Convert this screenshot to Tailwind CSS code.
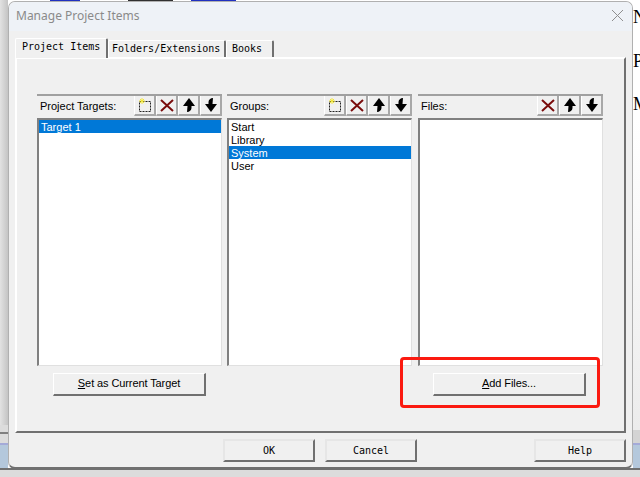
<!DOCTYPE html>
<html lang="en">
  <head>
    <meta charset="UTF-8" />
    <script src="https://cdn.jsdelivr.net/npm/@tailwindcss/browser@4"></script>
    <title>Manage Project Items</title>
  </head>
  <body class="relative w-[640px] h-[477px] overflow-hidden bg-white font-['Liberation_Sans',sans-serif] text-[11px] text-black">
    <!-- what is behind the dialog -->
    <div class="absolute left-0 top-0 w-[8px] h-[425px] bg-gradient-to-r from-[#e2e2e2] to-[#c4c4c4]"></div>
    <div class="absolute left-0 top-[425px] w-[8px] h-[18px] bg-[#dcdcdc]"></div>
    <div class="absolute left-0 top-[432px] w-[8px] h-[2px] bg-[#808080]"></div>
    <div class="absolute left-0 top-[443px] w-[8px] h-[2px] bg-[#a4aad8]"></div>
    <div class="absolute left-0 top-[445px] w-[8px] h-[23px] bg-[#b4c8dc]"></div>
    <div class="absolute left-0 top-[468px] w-[640px] h-[2px] bg-[#707070]"></div>
    <div class="absolute left-0 top-[470px] w-[640px] h-[7px] bg-[#dcdcdc]"></div>
    <div class="absolute left-[50px] top-0 flex gap-[4px]">
      <div class="w-[30px] h-px bg-[#2030c0]"></div>
      <div class="w-[40px] h-px bg-white"></div>
      <div class="w-[45px] h-px bg-[#303030]"></div>
      <div class="w-[10px] h-px bg-white"></div>
      <div class="w-[45px] h-px bg-[#2030c0]"></div>
    </div>
    <div class="absolute left-[633px] top-[4px] font-['Liberation_Serif',serif] text-[18px]">N</div>
    <div class="absolute left-[633px] top-[48px] font-['Liberation_Serif',serif] text-[18px]">P</div>
    <div class="absolute left-[633px] top-[91px] font-['Liberation_Serif',serif] text-[18px]">M</div>
    <div class="absolute left-[633px] top-[120px] w-[7px] h-[310px] bg-gradient-to-b from-white to-[#ececec]"></div>
    <div class="absolute left-[633px] top-[430px] w-[7px] h-[13px] bg-[#d4d4d4]"></div>
    <div class="absolute left-[633px] top-[443px] w-[7px] h-[2px] bg-[#a4aad8]"></div>
    <div class="absolute left-[633px] top-[445px] w-[7px] h-[23px] bg-[#b4c8dc]"></div>

    <!-- dialog -->
    <div class="absolute left-[8px] top-[1px] w-[625px] h-[468px] flex flex-col rounded-[7px] border border-[#b0b0b0] border-b-2 border-b-[#707070] bg-[#f0f0f0] overflow-hidden">
      <div class="h-[29px] shrink-0 flex items-center justify-between pl-[7px] pr-[8px] pb-[2px] bg-[#eef2f7] font-['Noto_Sans',sans-serif] text-[12px] text-[#8a8a8a]">
        <span>Manage Project Items</span>
        <svg width="13" height="13" viewBox="0 0 13 13" fill="none" stroke="#8f8f8f"><path d="M1 1l11 11M12 1L1 12" /></svg>
      </div>

      <div class="flex items-end h-[26px] shrink-0 pl-[6px] font-['DejaVu_Sans_Mono',monospace] text-[10px]">
        <div class="h-[20px] w-[93px] pl-[6px] border-t border-l border-white border-r-2 border-r-[#707070] bg-[#f0f0f0] rounded-t-[2px] relative top-[1px] z-10">Project Items</div>
        <div class="h-[17px] w-[118px] pl-[3px] border-t border-l border-white border-r-2 border-r-[#707070] rounded-t-[2px]">Folders/Extensions</div>
        <div class="h-[17px] w-[48px] pl-[5px] border-t border-l border-white border-r-2 border-r-[#707070] rounded-t-[2px]">Books</div>
      </div>

      <!-- tab body -->
      <div class="ml-[6px] w-[611px] h-[376px] shrink-0 border-t-2 border-l-2 border-[#ffffff] border-r-2 border-r-[#707070] border-b-2 border-b-[#707070] pt-[35px] pl-[20px]">
        <div class="flex gap-[5px]">
          <div class="w-[185px]">
            <div class="h-[22px] flex items-center justify-between border-t-2 border-[#a0a0a0]">
              <span class="pl-[3px]">Project Targets:</span>
              <div class="flex">
                <button class="w-[22px] h-[20px] flex items-center justify-center border-r-2 border-b-2 border-[#a8a8a8] border-l border-l-white"><svg width="14" height="14" viewBox="0 0 14 14"><path d="M1.500 3.500h11v10h-11z" fill="none" stroke="#222" stroke-dasharray="2 1" /><path d="M4 0v6M1 3h6M2 1l4 4M6 1L2 5" stroke="#f4e83a" /></svg></button>
                <button class="w-[22px] h-[20px] flex items-center justify-center border-r-2 border-b-2 border-[#a8a8a8] border-l border-l-white"><svg width="14" height="13" viewBox="0 0 14 13" fill="none" stroke="#7a0c0c" stroke-width="2"><path d="M1 1l12 11M13 1L1 12" /></svg></button>
                <button class="w-[22px] h-[20px] flex items-center justify-center border-r-2 border-b-2 border-[#a8a8a8] border-l border-l-white"><svg width="12" height="14" viewBox="0 0 12 14"><path d="M6 0l6 8H8.500V10C8.500 12 6.500 14 4 14L4.500 8H0z" fill="#000" /></svg></button>
                <button class="w-[22px] h-[20px] flex items-center justify-center border-r-2 border-b-2 border-[#a8a8a8] border-l border-l-white"><svg width="12" height="14" viewBox="0 0 12 14"><path d="M6 14L0 6H3.500V4C3.500 2 5.500 0 8 0L7.500 6H12z" fill="#000" /></svg></button>
              </div>
            </div>
            <div class="mt-[2px] h-[248px] bg-white border-t-2 border-l-2 border-[#808080] border-r border-b border-r-[#e0e0e0] border-b-[#e0e0e0]">
              <div class="h-[13px] leading-[15px] pl-[2px] bg-[#0078d7] text-white">Target 1</div>
            </div>
          </div>

          <div class="w-[185px]">
            <div class="h-[22px] flex items-center justify-between border-t-2 border-[#a0a0a0]">
              <span class="pl-[3px]">Groups:</span>
              <div class="flex">
                <button class="w-[22px] h-[20px] flex items-center justify-center border-r-2 border-b-2 border-[#a8a8a8] border-l border-l-white"><svg width="14" height="14" viewBox="0 0 14 14"><path d="M1.500 3.500h11v10h-11z" fill="none" stroke="#222" stroke-dasharray="2 1" /><path d="M4 0v6M1 3h6M2 1l4 4M6 1L2 5" stroke="#f4e83a" /></svg></button>
                <button class="w-[22px] h-[20px] flex items-center justify-center border-r-2 border-b-2 border-[#a8a8a8] border-l border-l-white"><svg width="14" height="13" viewBox="0 0 14 13" fill="none" stroke="#7a0c0c" stroke-width="2"><path d="M1 1l12 11M13 1L1 12" /></svg></button>
                <button class="w-[22px] h-[20px] flex items-center justify-center border-r-2 border-b-2 border-[#a8a8a8] border-l border-l-white"><svg width="12" height="14" viewBox="0 0 12 14"><path d="M6 0l6 8H8.500V10C8.500 12 6.500 14 4 14L4.500 8H0z" fill="#000" /></svg></button>
                <button class="w-[22px] h-[20px] flex items-center justify-center border-r-2 border-b-2 border-[#a8a8a8] border-l border-l-white"><svg width="12" height="14" viewBox="0 0 12 14"><path d="M6 14L0 6H3.500V4C3.500 2 5.500 0 8 0L7.500 6H12z" fill="#000" /></svg></button>
              </div>
            </div>
            <div class="mt-[2px] h-[248px] bg-white border-t-2 border-l-2 border-[#808080] border-r border-b border-r-[#e0e0e0] border-b-[#e0e0e0]">
              <div class="h-[13px] leading-[15px] pl-[2px]">Start</div>
              <div class="h-[13px] leading-[15px] pl-[2px]">Library</div>
              <div class="h-[13px] leading-[15px] pl-[2px] bg-[#0078d7] text-white">System</div>
              <div class="h-[13px] leading-[15px] pl-[2px]">User</div>
            </div>
          </div>

          <div class="w-[185px] ml-[1px]">
            <div class="h-[22px] flex items-center justify-between border-t-2 border-[#a0a0a0]">
              <span class="pl-[3px]">Files:</span>
              <div class="flex">
                <button class="w-[22px] h-[20px] flex items-center justify-center border-r-2 border-b-2 border-[#a8a8a8] border-l border-l-white"><svg width="14" height="13" viewBox="0 0 14 13" fill="none" stroke="#7a0c0c" stroke-width="2"><path d="M1 1l12 11M13 1L1 12" /></svg></button>
                <button class="w-[22px] h-[20px] flex items-center justify-center border-r-2 border-b-2 border-[#a8a8a8] border-l border-l-white"><svg width="12" height="14" viewBox="0 0 12 14"><path d="M6 0l6 8H8.500V10C8.500 12 6.500 14 4 14L4.500 8H0z" fill="#000" /></svg></button>
                <button class="w-[22px] h-[20px] flex items-center justify-center border-r-2 border-b-2 border-[#a8a8a8] border-l border-l-white"><svg width="12" height="14" viewBox="0 0 12 14"><path d="M6 14L0 6H3.500V4C3.500 2 5.500 0 8 0L7.500 6H12z" fill="#000" /></svg></button>
              </div>
            </div>
            <div class="mt-[2px] h-[248px] bg-white border-t-2 border-l-2 border-[#808080] border-r border-b border-r-[#e0e0e0] border-b-[#e0e0e0]"></div>
          </div>
        </div>

        <div class="flex mt-[7px] tracking-[-0.1px]">
          <button class="ml-[16px] w-[153px] h-[23px] pb-[2px] border-t border-l border-white border-r-2 border-b-2 border-r-[#707070] border-b-[#707070]"><span class="underline">S</span>et as Current Target</button>
          <button class="ml-[227px] w-[153px] h-[23px] pb-[2px] border-t border-l border-white border-r-2 border-b-2 border-r-[#707070] border-b-[#707070]"><span class="underline">A</span>dd Files...</button>
        </div>
      </div>

      <div class="flex mt-[6px] font-['DejaVu_Sans_Mono',monospace] text-[10px]">
        <button class="ml-[214px] w-[92px] h-[23px] border-t-2 border-l-2 border-[#e6e6e6] border-r-2 border-b-2 border-r-[#707070] border-b-[#707070]">OK</button>
        <button class="ml-[10px] w-[92px] h-[23px] border-t-2 border-l-2 border-[#e6e6e6] border-r-2 border-b-2 border-r-[#707070] border-b-[#707070]">Cancel</button>
        <button class="ml-[117px] w-[92px] h-[23px] border-t-2 border-l-2 border-[#e6e6e6] border-r-2 border-b-2 border-r-[#707070] border-b-[#707070]">Help</button>
      </div>
    </div>

    <!-- red annotation -->
    <div class="absolute left-[400px] top-[357px] w-[200px] h-[51px] border-[3px] border-[#fb1a10] rounded-[4px]"></div>
  </body>
</html>
